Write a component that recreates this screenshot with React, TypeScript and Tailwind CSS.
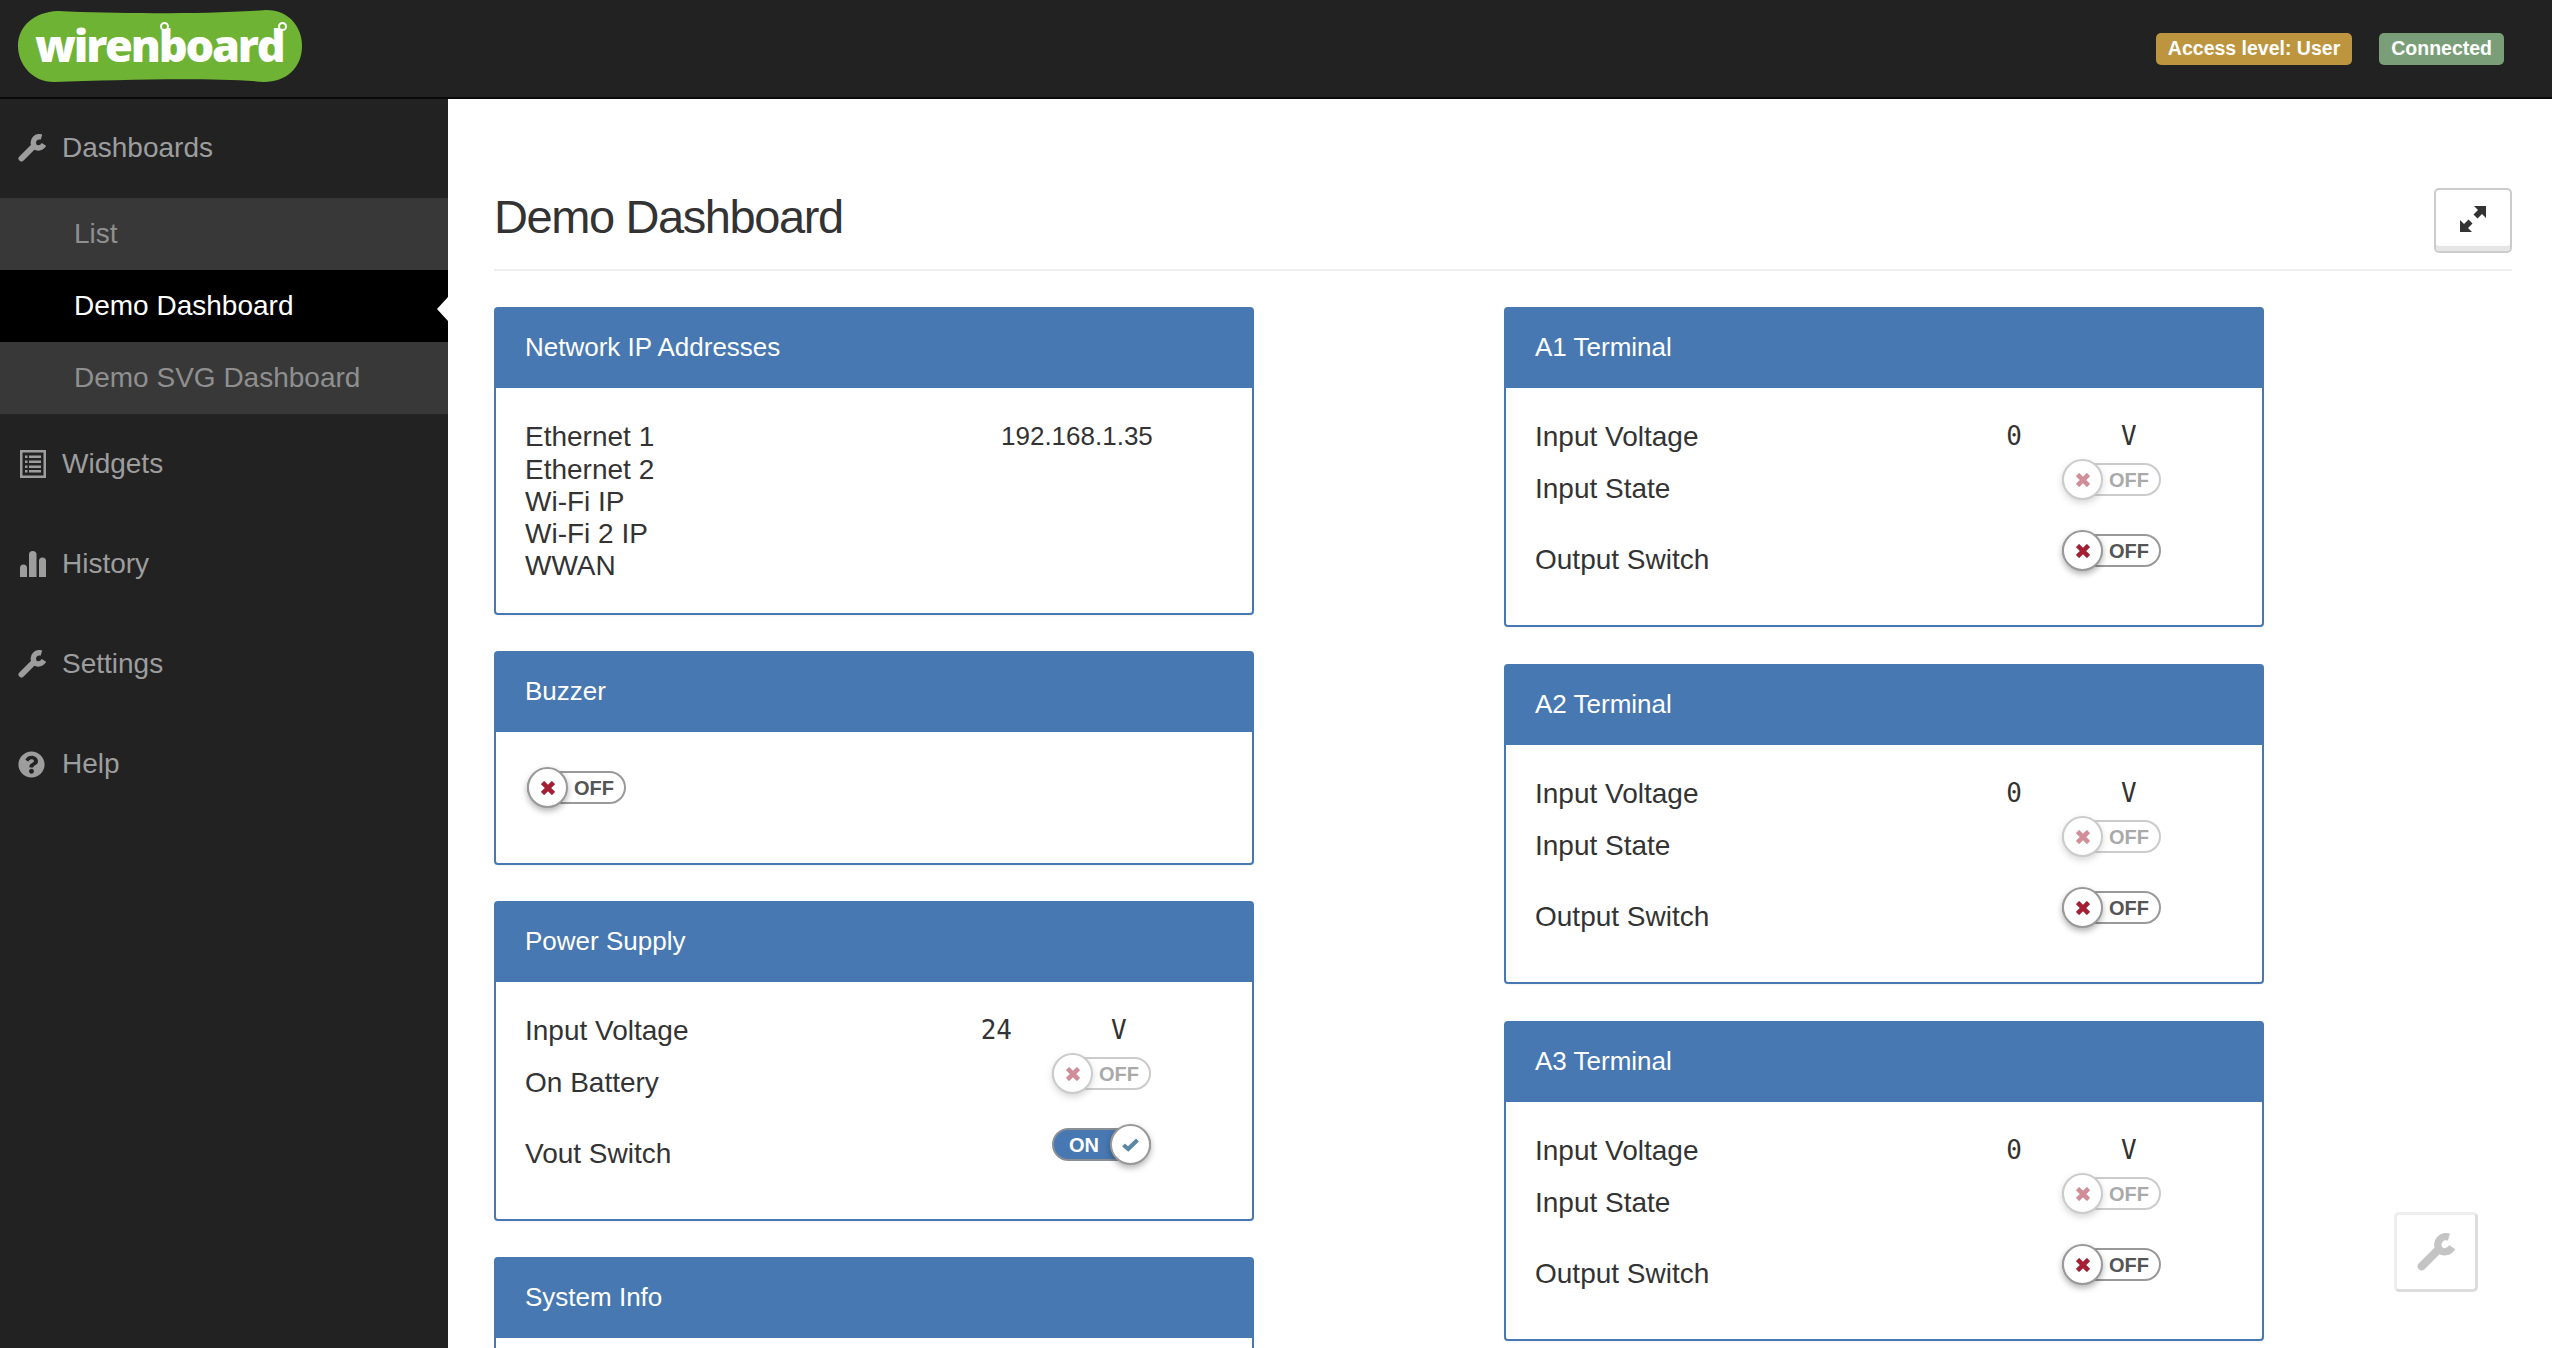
import { FaQuestionCircle } from 'react-icons/fa';

const SANS = "font-['Liberation_Sans',Arial,sans-serif]";

function WrenchIcon({ className }: { className?: string }) {
  return (
    <svg viewBox="0 0 28 28" className={className} fill="none" stroke="currentColor">
      <path d="M3.5 24.5 L15 13" strokeWidth="6" strokeLinecap="round" />
      <path d="M23.5 3 C18 1.5 14 6 15.8 11 C17.5 15 23 15 26 10.5" strokeWidth="5.4" />
    </svg>
  );
}

function ListIcon({ className }: { className?: string }) {
  return (
    <svg viewBox="0 0 26 28" className={className} fill="currentColor">
      <path fillRule="evenodd" d="M0 0h26v28H0z M2.5 2.5v23h21v-23z" />
      <path d="M5 5.5h2.5v2.5H5zM9 5.5h12v2.5H9zM5 10.5h2.5V13H5zM9 10.5h12V13H9zM5 15.5h2.5V18H5zM9 15.5h12V18H9zM5 20h2.5v2.5H5zM9 20h12v2.5H9z" />
    </svg>
  );
}

function BarsIcon({ className }: { className?: string }) {
  return (
    <svg viewBox="0 0 26 26" className={className} fill="currentColor">
      <path d="M0 26V17a3.5 3.5 0 0 1 7 0v9zM9 26V3.5a3.75 3.5 0 0 1 7.5 0V26zM19 26V10a3.5 3.5 0 0 1 7 0v16z" />
    </svg>
  );
}

function ExpandIcon({ className }: { className?: string }) {
  return (
    <svg viewBox="0 0 26 26" className={className} fill="currentColor">
      <path d="M14 0h12v12l-4-4-4.5 4.5-4-4L18 4z" />
      <path d="M12 26H0V14l4 4 4.5-4.5 4 4L8 22z" />
    </svg>
  );
}

function CrossIcon() {
  return (
    <svg viewBox="0 0 14 14" className="w-[14px] h-[14px]" fill="none" stroke="#a41e34" strokeWidth="4.6">
      <path d="M1.5 1.5 L12.5 12.5 M12.5 1.5 L1.5 12.5" />
    </svg>
  );
}

function CheckIcon() {
  return (
    <svg viewBox="0 0 17 14" className="w-[17px] h-[14px]" fill="none" stroke="#5b88a5" strokeWidth="4.2">
      <path d="M1.5 7 L6.2 11 L15.5 2" />
    </svg>
  );
}

function Logo() {
  return (
    <div className="relative w-[284px] h-[72px] ml-[18px] mt-[10px]">
      <svg viewBox="0 0 284 72" className="w-full h-full" fill="#6fb335">
        <path d="M40 1C100 4 190 4 248 0C272 0 284 18 284 36C284 58 268 72 246 72C190 67 100 70 36 72C14 72 0 54 0 36C0 16 16 2 40 1Z" />
      </svg>
      <span className="absolute left-[17px] top-[-1px] text-[45px] leading-[72px] font-extrabold tracking-[-2.2px] text-white font-['Open_Sans',sans-serif]">
        wirenboard
      </span>
      <span className="absolute left-[142px] top-[12px] w-[9px] h-[9px] rounded-full border-[2.5px] border-white bg-[#6fb335]" />
      <span className="absolute left-[260px] top-[12px] w-[9px] h-[9px] rounded-full border-[2.5px] border-white bg-[#6fb335]" />
    </div>
  );
}

function SidebarLink({ icon, label, first }: { icon: React.ReactNode; label: string; first?: boolean }) {
  return (
    <div className={first ? 'h-[99px] pb-[2px] flex items-center pl-[18px] text-[28px] text-[#9d9d9d]' : 'h-[100px] flex items-center pl-[18px] text-[28px] text-[#9d9d9d]'}>
      <span className="w-[44px] flex items-center">{icon}</span>
      {label}
    </div>
  );
}

function SubLink({ label, active }: { label: string; active?: boolean }) {
  return (
    <div
      className={
        active
          ? 'relative h-[72px] flex items-center pl-[74px] text-[28px] bg-black text-white'
          : 'h-[72px] flex items-center pl-[74px] text-[28px] bg-[#383838] text-[#8f8f8f]'
      }
    >
      {label}
      {active && (
        <span className="absolute right-0 top-[27px] border-y-[12px] border-r-[11px] border-y-transparent border-r-white" />
      )}
    </div>
  );
}

function Sidebar() {
  return (
    <aside className="w-[448px] shrink-0 bg-[#222222]">
      <SidebarLink first icon={<WrenchIcon className="w-[28px] h-[28px]" />} label="Dashboards" />
      <SubLink label="List" />
      <SubLink label="Demo Dashboard" active />
      <SubLink label="Demo SVG Dashboard" />
      <SidebarLink icon={<ListIcon className="w-[26px] h-[28px] ml-[2px]" />} label="Widgets" />
      <SidebarLink icon={<BarsIcon className="w-[26px] h-[26px] ml-[2px]" />} label="History" />
      <SidebarLink icon={<WrenchIcon className="w-[28px] h-[28px]" />} label="Settings" />
      <SidebarLink icon={<FaQuestionCircle className="w-[27px] h-[27px]" />} label="Help" />
    </aside>
  );
}

function Toggle({ on, disabled }: { on?: boolean; disabled?: boolean }) {
  return (
    <div className={disabled ? 'relative w-[99px] h-[41px] flex items-center opacity-50' : 'relative w-[99px] h-[41px] flex items-center'}>
      {on ? (
        <>
          <div className="w-full h-[33px] rounded-full border-2 border-[#8a8f96] bg-[#4778b2] pl-[15px] flex items-center text-[20px] leading-none font-bold text-white">
            ON
          </div>
          <div className="absolute right-0 top-0 w-[41px] h-[41px] rounded-full bg-white border-2 border-[#999999] shadow-[0_3px_6px_rgba(0,0,0,0.3)] flex items-center justify-center">
            <CheckIcon />
          </div>
        </>
      ) : (
        <>
          <div className="w-full h-[33px] rounded-full border-2 border-[#999999] pl-[45px] flex items-center text-[20px] leading-none font-bold text-[#555555]">
            OFF
          </div>
          <div className="absolute left-0 top-0 w-[41px] h-[41px] rounded-full bg-white border-2 border-[#999999] shadow-[0_3px_6px_rgba(0,0,0,0.3)] flex items-center justify-center">
            <CrossIcon />
          </div>
        </>
      )}
    </div>
  );
}

function Panel({ title, children }: { title: string; children?: React.ReactNode }) {
  return (
    <section className="w-[760px] border-2 border-[#4778b2] rounded-[4px] shadow-[0_1px_2px_rgba(0,0,0,0.05)] bg-white">
      <h3 className="h-[79px] pb-[2px] bg-[#4778b2] pl-[29px] flex items-center text-[26px] text-white">{title}</h3>
      {children}
    </section>
  );
}

function ValueRow({ label, value, unit }: { label: string; value: string; unit: string }) {
  return (
    <div className="h-[33px] flex items-center">
      <span className="w-[427px] text-[28px]">{label}</span>
      <span className="w-[60px] text-right text-[26px] font-['DejaVu_Sans_Mono',monospace]">{value}</span>
      <span className="ml-[99px] text-[26px] font-['DejaVu_Sans_Mono',monospace]">{unit}</span>
    </div>
  );
}

function SwitchRow({ label, on, disabled }: { label: string; on?: boolean; disabled?: boolean }) {
  return (
    <div className="h-[71px] flex">
      <span className="w-[527px] pt-[1px] flex items-center text-[28px]">{label}</span>
      <div className="pt-[6px]">
        <Toggle on={on} disabled={disabled} />
      </div>
    </div>
  );
}

function SwitchPanelBody({ value, label2, label3, on }: { value: string; label2: string; label3: string; on?: boolean }) {
  return (
    <div className="pl-[29px] pt-[32px] pb-[30px] text-[#333333]">
      <ValueRow label="Input Voltage" value={value} unit="V" />
      <SwitchRow label={label2} disabled />
      <SwitchRow label={label3} on={on} />
    </div>
  );
}

function NetworkBody() {
  return (
    <div className="pl-[29px] pt-[32px] pb-[31px] text-[#333333] text-[28px]">
      <div className="h-[33px] flex items-center">
        <span className="w-[476px]">Ethernet 1</span>
        <span className="text-[26px]">192.168.1.35</span>
      </div>
      <div className="h-[33px] flex items-center">Ethernet 2</div>
      <div className="h-[32px] flex items-center">Wi-Fi IP</div>
      <div className="h-[32px] flex items-center">Wi-Fi 2 IP</div>
      <div className="h-[32px] flex items-center">WWAN</div>
    </div>
  );
}

function Dashboard() {
  return (
    <main className="flex-1 pt-[89px] pl-[46px] pr-[40px] bg-white overflow-hidden">
      <div className="h-[65px] flex items-center justify-between">
        <h1 className="pb-[6px] text-[47px] tracking-[-1.4px] text-[#333333]">Demo Dashboard</h1>
        <button className="w-[78px] h-[65px] rounded-[5px] border-2 border-[#cccccc] bg-white shadow-[inset_0_-5px_0_#e6e6e6] flex items-center justify-center text-[#333333]">
          <ExpandIcon className="w-[26px] h-[26px] mb-[4px]" />
        </button>
      </div>
      <div className="mt-[16px] mb-[36px] h-[2px] bg-[#eeeeee]" />
      <div className="flex gap-[250px]">
        <div className="flex flex-col gap-[36px]">
          <Panel title="Network IP Addresses">
            <NetworkBody />
          </Panel>
          <Panel title="Buzzer">
            <div className="pl-[31px] pt-[35px] h-[131px]">
              <Toggle />
            </div>
          </Panel>
          <Panel title="Power Supply">
            <SwitchPanelBody value="24" label2="On Battery" label3="Vout Switch" on />
          </Panel>
          <Panel title="System Info">
            <div className="h-[200px]" />
          </Panel>
        </div>
        <div className="flex flex-col gap-[37px]">
          <Panel title="A1 Terminal">
            <SwitchPanelBody value="0" label2="Input State" label3="Output Switch" />
          </Panel>
          <Panel title="A2 Terminal">
            <SwitchPanelBody value="0" label2="Input State" label3="Output Switch" />
          </Panel>
          <Panel title="A3 Terminal">
            <SwitchPanelBody value="0" label2="Input State" label3="Output Switch" />
          </Panel>
        </div>
      </div>
    </main>
  );
}

export default function App() {
  return (
    <div className={`${SANS} h-screen overflow-hidden flex flex-col bg-white`}>
      <header className="h-[99px] shrink-0 bg-[#222222] border-b-2 border-[#0a0a0a] flex justify-between">
        <Logo />
        <div className="flex gap-[27px] pt-[33px] pr-[48px] text-[19.5px] font-bold text-white">
          <span className="h-[32px] px-[12px] rounded-[5px] bg-[#be953f] flex items-center">Access level: User</span>
          <span className="h-[32px] px-[12px] rounded-[5px] bg-[#7a9f78] flex items-center">Connected</span>
        </div>
      </header>
      <div className="flex-1 flex min-h-0">
        <Sidebar />
        <Dashboard />
      </div>
      <button className="fixed left-[2394px] top-[1212px] w-[84px] h-[80px] rounded-[5px] border-[3px] border-[#eeeeee] border-r-[#dddddd] border-b-[#dddddd] bg-white flex items-center justify-center text-[#c4c4c4]">
        <WrenchIcon className="w-[38px] h-[38px]" />
      </button>
    </div>
  );
}
